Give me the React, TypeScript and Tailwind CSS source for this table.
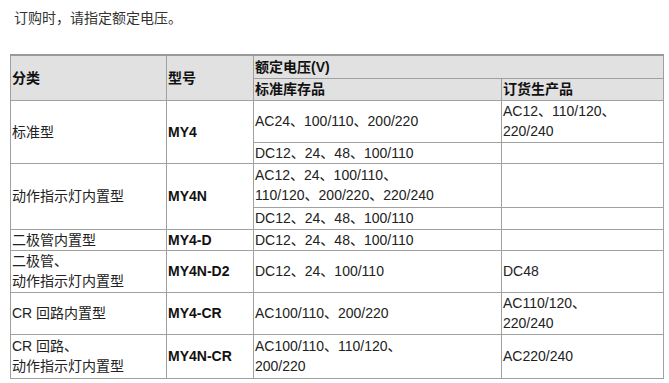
const cell = "border border-[#a0a0a0] px-px py-0 align-middle";
const font = { fontFamily: '"Liberation Sans", Arial, "Noto Sans CJK SC", sans-serif' };

const rows = [
  {
    kind: "标准型",
    model: "MY4",
    subs: [
      { std: "AC24、100/110、200/220", order: ["AC12、110/120、", "220/240"], h: "h-[42px]" },
      { std: "DC12、24、48、100/110", order: [], h: "h-[21px]" },
    ],
  },
  {
    kind: "动作指示灯内置型",
    model: "MY4N",
    subs: [
      { std: ["AC12、24、100/110、", "110/120、200/220、220/240"], order: [], h: "h-[44px]" },
      { std: "DC12、24、48、100/110", order: [], h: "h-[22px]" },
    ],
  },
];

const singles = [
  { kind: ["二极管内置型"], model: "MY4-D", std: ["DC12、24、48、100/110"], order: [], h: "h-[21px]" },
  { kind: ["二极管、", "动作指示灯内置型"], model: "MY4N-D2", std: ["DC12、24、100/110"], order: ["DC48"], h: "h-[42px]" },
  { kind: ["CR 回路内置型"], model: "MY4-CR", std: ["AC100/110、200/220"], order: ["AC110/120、", "220/240"], h: "h-[42px]" },
  { kind: ["CR 回路、", "动作指示灯内置型"], model: "MY4N-CR", std: ["AC100/110、110/120、", "200/220"], order: ["AC220/240"], h: "h-[44px]" },
];

const Lines = ({ lines }: { lines: string | string[] }) => {
  const arr = typeof lines === "string" ? [lines] : lines;
  return (
    <>
      {arr.map((l, i) => (
        <span key={i} className="block h-[20px] leading-[20px]">
          {l}
        </span>
      ))}
    </>
  );
};

export default function App() {
  return (
    <div className="bg-white w-[669px] h-[383px] text-[14px] leading-[20px] text-[#222]" style={font}>
      <div className="pl-[14px] pt-[8px] h-[54px] text-[#333]">订购时，请指定额定电压。</div>
      <table className="ml-[10px] w-[653px] table-fixed border-collapse border-t-2 border-t-[#999]">
        <colgroup>
          <col className="w-[156px]" />
          <col className="w-[87px]" />
          <col className="w-[248px]" />
          <col className="w-[162px]" />
        </colgroup>
        <thead className="bg-[#e1e1e1] font-bold text-[#111]">
          <tr className="h-[23px]">
            <th rowSpan={2} className={`${cell} text-left font-bold`}>分类</th>
            <th rowSpan={2} className={`${cell} text-left font-bold`}>型号</th>
            <th colSpan={2} className={`${cell} text-left font-bold`}>额定电压(V)</th>
          </tr>
          <tr className="h-[22px]">
            <th className={`${cell} text-left font-bold`}>标准库存品</th>
            <th className={`${cell} text-left font-bold`}>订货生产品</th>
          </tr>
        </thead>
        <tbody>
          {rows.map((r) =>
            r.subs.map((s, i) => (
              <tr key={r.model + i} className={s.h}>
                {i === 0 && (
                  <>
                    <td rowSpan={2} className={cell}><Lines lines={r.kind} /></td>
                    <td rowSpan={2} className={`${cell} font-bold text-[#111]`}><Lines lines={r.model} /></td>
                  </>
                )}
                <td className={cell}><Lines lines={s.std} /></td>
                <td className={cell}><Lines lines={s.order} /></td>
              </tr>
            ))
          )}
          {singles.map((r) => (
            <tr key={r.model} className={r.h}>
              <td className={cell}><Lines lines={r.kind} /></td>
              <td className={`${cell} font-bold text-[#111]`}><Lines lines={r.model} /></td>
              <td className={cell}><Lines lines={r.std} /></td>
              <td className={cell}><Lines lines={r.order} /></td>
            </tr>
          ))}
        </tbody>
      </table>
    </div>
  );
}
